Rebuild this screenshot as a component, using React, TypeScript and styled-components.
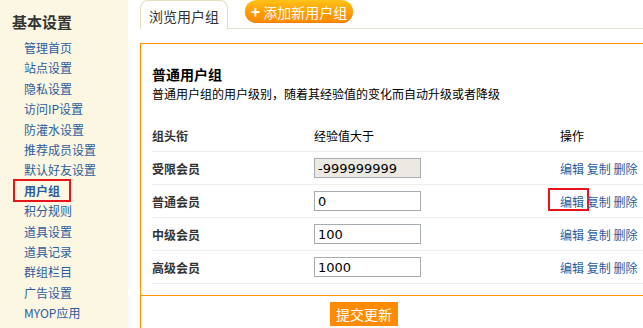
import React from "react"
import { styled, createGlobalStyle } from "styled-components"

// ■■■■■■■■■■■■■■■■■■■■■■■■■■■■■■■■■■■■■■■■■■■■■■■■■■■■■■■■■■■■■■■■■■■■■■■■■■■■■

const menu = [
	"管理首页",
	"站点设置",
	"隐私设置",
	"访问IP设置",
	"防灌水设置",
	"推荐成员设置",
	"默认好友设置",
	"用户组",
	"积分规则",
	"道具设置",
	"道具记录",
	"群组栏目",
	"广告设置",
	"MYOP应用",
]

const groups = [
	{ name: "受限会员", value: "-999999999", locked: true },
	{ name: "普通会员", value: "0", mark: true },
	{ name: "中级会员", value: "100" },
	{ name: "高级会员", value: "1000" },
]

export default function App() {
	return (
		<>
			<GlobalStyle />
			<Page>
				<Sidebar>
					<SideTitle>基本设置</SideTitle>
					{menu.map((m) => (
						<SideItem key={m} $active={m === "用户组"}>
							{m}
						</SideItem>
					))}
				</Sidebar>

				<Main>
					<Tabs>
						<Tab>浏览用户组</Tab>
						<AddButton>
							<b>+</b> 添加新用户组
						</AddButton>
					</Tabs>

					<Box>
						<BoxBody>
							<BoxTitle>普通用户组</BoxTitle>
							<BoxDesc>普通用户组的用户级别，随着其经验值的变化而自动升级或者降级</BoxDesc>

							<Table>
								<Row>
									<HeadCell $bold>组头衔</HeadCell>
									<HeadCell>经验值大于</HeadCell>
									<HeadCell>操作</HeadCell>
								</Row>
								{groups.map((g) => (
									<Row key={g.name}>
										<Label>{g.name}</Label>
										<div>
											<ValueInput defaultValue={g.value} disabled={g.locked} />
										</div>
										<Actions>
											<Link $mark={g.mark}>编辑</Link> <Link>复制</Link> <Link>删除</Link>
										</Actions>
									</Row>
								))}
							</Table>
						</BoxBody>
						<BoxFooter>
							<Submit>提交更新</Submit>
						</BoxFooter>
					</Box>
				</Main>
			</Page>
		</>
	)
}

// 〓〓〓〓〓〓〓〓〓〓〓〓〓〓〓〓〓〓〓〓〓〓〓〓〓〓〓〓〓〓	STYLED_COMPONENTS

const GlobalStyle = createGlobalStyle`
	html, body {
		margin: 0;
		padding: 0;
		overflow: hidden;
		background: #fff;
		font-family: "Noto Sans CJK SC", "DejaVu Sans", sans-serif;
		font-size: 12px;
		color: #000;
	}
`

const Page = styled.div`
	display: flex;
	width: 643px;
	height: 328px;
	overflow: hidden;
`

const Sidebar = styled.div`
	width: 128px;
	flex: none;
	background: #fbf7e3;
	padding-top: 12px;
	box-sizing: border-box;
`

const SideTitle = styled.div`
	font-size: 15px;
	font-weight: bold;
	color: #333;
	line-height: 20px;
	padding-left: 12px;
	margin-bottom: 6px;
`

const SideItem = styled.div<{ $active?: boolean }>`
	position: relative;
	padding-left: 24px;
	line-height: 20.4px;
	color: #2c5c9c;
	font-weight: ${(p) => (p.$active ? "bold" : "normal")};

	&::after {
		content: "";
		display: ${(p) => (p.$active ? "block" : "none")};
		position: absolute;
		left: 13px;
		top: -2px;
		width: 58px;
		height: 23px;
		border: 2px solid #e8141c;
		box-sizing: border-box;
	}
`

const Main = styled.div`
	flex: 1;
	min-width: 0;
	display: flex;
	flex-direction: column;
	padding-left: 12px;
`

const Tabs = styled.div`
	display: flex;
	align-items: flex-start;
	height: 28px;
	flex: none;
	border-bottom: 1px solid #e8e3c8;
`

const Tab = styled.div`
	width: 88px;
	height: 29px;
	box-sizing: border-box;
	border: 1px solid #e4dec2;
	border-bottom: none;
	border-radius: 8px 8px 0 0;
	background: #fff;
	font-size: 14px;
	color: #333;
	line-height: 30px;
	text-align: center;
`

const AddButton = styled.div`
	margin-left: 17px;
	width: 108px;
	height: 23px;
	border-radius: 12px;
	background: linear-gradient(#ffc21a, #ff9b00 55%, #ff8a00);
	box-shadow: inset 0 -1px 0 #f08000;
	color: #fff;
	font-size: 14px;
	line-height: 23px;
	text-align: center;

	b {
		font-size: 16px;
	}
`

const Box = styled.div`
	flex: 1;
	margin-top: 14px;
	border: 1px solid #ff9400;
	border-right: none;
	border-bottom: none;
`

const BoxBody = styled.div`
	padding: 20px 0 11px 11px;
	border-bottom: 1px solid #ff9400;
`

const BoxTitle = styled.div`
	font-size: 14px;
	font-weight: bold;
	line-height: 20px;
	color: #000;
`

const BoxDesc = styled.div`
	line-height: 20px;
	margin-bottom: 15px;
`

const Table = styled.div`
	display: flex;
	flex-direction: column;
`

const Row = styled.div`
	display: grid;
	grid-template-columns: 162px 246px auto;
	align-items: center;
	height: 32px;
	border-bottom: 1px solid #eeeeee;
`

const HeadCell = styled.div<{ $bold?: boolean }>`
	font-weight: ${(p) => (p.$bold ? "bold" : "normal")};
	color: ${(p) => (p.$bold ? "#333" : "#000")};
	font-size: 12px;
`

const Label = styled.div`
	font-weight: bold;
	color: #333;
`

const ValueInput = styled.input`
	width: 107px;
	height: 20px;
	box-sizing: border-box;
	border: 1px solid #a5acb2;
	padding: 0 3px;
	font-family: "DejaVu Sans", "Noto Sans CJK SC", sans-serif;
	font-size: 13px;
	color: #000;
	background: #fff;
	outline: none;

	&:disabled {
		background: #ebe9e2;
		color: #000;
	}
`

const Actions = styled.div`
	color: #2c5c9c;
	white-space: nowrap;
`

const Link = styled.span<{ $mark?: boolean }>`
	position: relative;
	color: #2c5c9c;

	&::after {
		content: "";
		display: ${(p) => (p.$mark ? "block" : "none")};
		position: absolute;
		left: -12px;
		top: -5px;
		width: 41px;
		height: 23px;
		border: 2px solid #e8141c;
		box-sizing: border-box;
	}
`

const BoxFooter = styled.div`
	padding: 6px 0 0 189px;
`

const Submit = styled.div`
	width: 68px;
	height: 24px;
	background: #ff8c00;
	color: #fff;
	font-size: 14px;
	line-height: 24px;
	text-align: center;
`
